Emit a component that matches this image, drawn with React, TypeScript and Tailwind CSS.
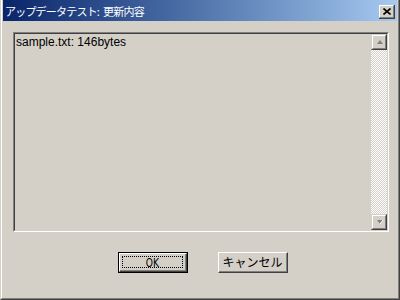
import React from 'react';

const ui = { fontFamily: '"Noto Sans CJK JP", "Liberation Sans", sans-serif' };

function ScrollArrow({ up }: { up?: boolean }) {
  return (
    <div className="w-[16px] h-[16px] bg-[#d4d0c8] border-t border-l border-t-[#d4d0c8] border-l-[#d4d0c8] border-r border-b border-r-[#404040] border-b-[#404040]">
      <div className="w-full h-full border-t border-l border-t-white border-l-white border-r border-b border-r-[#808080] border-b-[#808080] flex items-center justify-center">
        <svg width="9" height="6" viewBox="0 0 9 6">
          {up ? (
            <path d="M1 5 L4 1 L7 5 Z" fill="#808080" transform="translate(1,0)" />
          ) : (
            <>
              <path d="M1 1 L7 1 L4 5 Z" fill="#808080" transform="translate(1,0)" />
              <path d="M5 5 L8 1" stroke="#fff" strokeWidth="1" />
            </>
          )}
        </svg>
      </div>
    </div>
  );
}

export default function App() {
  return (
    <div className="w-[400px] h-[300px] bg-[#d4d0c8] border-l border-r border-b border-l-[#d4d0c8] border-r-[#404040] border-b-[#404040]" style={ui}>
      <div className="w-full h-full border-l border-r border-b border-l-white border-r-[#808080] border-b-[#808080] flex flex-col px-[1px]">
        {/* title bar */}
        <div className="h-[21px] flex items-center justify-between bg-gradient-to-r from-[#0a246a] to-[#a6caf0] pl-[2px] pr-[2px]">
          <span className="text-white text-[11px] tracking-[-0.8px] leading-none pt-[1px]">
            アップデータテスト:<span className="ml-[4px]">更新内容</span>
          </span>
          <div className="w-[16px] h-[14px] bg-[#d4d0c8] border-r border-b border-r-[#404040] border-b-[#404040] mt-[3px]">
            <div className="w-full h-full border-t border-l border-t-white border-l-white border-r border-b border-r-[#808080] border-b-[#808080] flex items-center justify-center">
              <svg width="8" height="7" viewBox="0 0 8 7">
                <path d="M0.5 0.5 L7.5 6.5 M7.5 0.5 L0.5 6.5" stroke="#000" strokeWidth="1.6" />
              </svg>
            </div>
          </div>
        </div>

        {/* text box */}
        <div className="ml-[10px] mt-[11px] w-[376px] h-[200px] border-t border-l border-t-[#808080] border-l-[#808080] border-r border-b border-r-white border-b-white">
          <div className="w-full h-full border-t border-l border-t-[#404040] border-l-[#404040] border-r border-b border-r-[#d4d0c8] border-b-[#d4d0c8] flex">
            <div className="flex-1 pl-[1px] pt-[1px] text-[12px] leading-[14px] text-black" style={{ fontFamily: '"Liberation Sans", sans-serif' }}>
              sample.txt: 146bytes
            </div>
            <div className="w-[16px] flex flex-col bg-[repeating-conic-gradient(#ffffff_0_25%,#d4d0c8_0_50%)] bg-[length:2px_2px]">
              <ScrollArrow up />
              <div className="flex-1" />
              <ScrollArrow />
            </div>
          </div>
        </div>

        {/* buttons */}
        <div className="flex gap-[30px] pl-[115px] mt-[20px]">
          <div className="w-[70px] h-[21px] border border-black">
            <div className="w-full h-full border-t border-l border-t-white border-l-white border-r border-b border-r-[#404040] border-b-[#404040]">
              <div className="w-full h-full border-r border-b border-r-[#808080] border-b-[#808080] p-[2px]">
                <div className="w-full h-full border border-dotted border-black flex items-center justify-center">
                  <span className="text-[13px] leading-none text-black scale-x-[0.7] inline-block" style={{ fontFamily: '"DejaVu Sans", sans-serif' }}>OK</span>
                </div>
              </div>
            </div>
          </div>
          <div className="w-[70px] h-[21px] border-t border-l border-t-white border-l-white border-r border-b border-r-[#404040] border-b-[#404040]">
            <div className="w-full h-full border-r border-b border-r-[#808080] border-b-[#808080] flex items-center justify-center">
              <span className="text-[12px] leading-none text-black">キャンセル</span>
            </div>
          </div>
        </div>
      </div>
    </div>
  );
}
